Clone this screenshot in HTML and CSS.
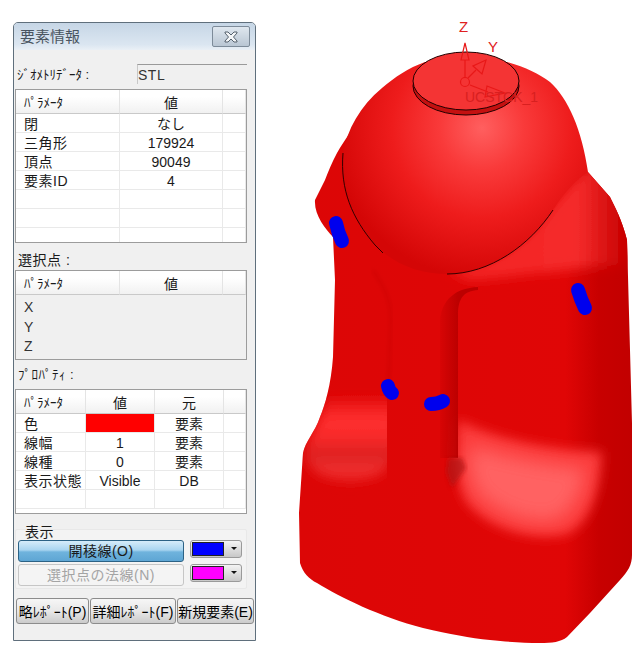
FILE: index.html
```html
<!DOCTYPE html>
<html lang="ja">
<head>
    <meta charset="UTF-8">
    <title>要素情報</title>
    <link rel="stylesheet" href="styles.css">
</head>
<body>
    <div class="page">
        <div class="dialog">
            <div class="title-bar">
                <span class="title">要素情報</span>
                <button class="close-btn">
                    <svg width="16" height="12" viewBox="0 0 16 12">
                        <path class="close-x" d="M2 1h3l3 3 3-3h3v1l-3.500 4 3.500 4v1h-3l-3-3-3 3h-3v-1l3.500-4-3.500-4z"/>
                    </svg>
                </button>
            </div>

            <div class="geo-row">
                <span class="geo-label">ｼﾞｵﾒﾄﾘﾃﾞｰﾀ :</span>
                <div class="geo-value">STL</div>
            </div>

            <div class="table-box box-elem">
                <table class="grid cols-2">
                    <tr><th class="left">ﾊﾟﾗﾒｰﾀ</th><th>値</th><th></th></tr>
                    <tr><td class="left">閉</td><td>なし</td><td></td></tr>
                    <tr><td class="left">三角形</td><td>179924</td><td></td></tr>
                    <tr><td class="left">頂点</td><td>90049</td><td></td></tr>
                    <tr><td class="left">要素ID</td><td>4</td><td></td></tr>
                    <tr><td></td><td></td><td></td></tr>
                    <tr><td></td><td></td><td></td></tr>
                    <tr><td></td><td></td><td></td></tr>
                </table>
            </div>

            <div class="section-label label-point">選択点 :</div>
            <div class="table-box box-point">
                <table class="grid cols-2 plain">
                    <tr><th class="left">ﾊﾟﾗﾒｰﾀ</th><th>値</th><th></th></tr>
                    <tr><td class="left">X</td><td></td><td></td></tr>
                    <tr><td class="left">Y</td><td></td><td></td></tr>
                    <tr><td class="left">Z</td><td></td><td></td></tr>
                </table>
            </div>

            <div class="section-label label-prop">ﾌﾟﾛﾊﾟﾃｨ :</div>
            <div class="table-box box-prop">
                <table class="grid cols-3">
                    <tr><th class="left">ﾊﾟﾗﾒｰﾀ</th><th>値</th><th>元</th><th></th></tr>
                    <tr><td class="left">色</td><td class="red-cell"></td><td>要素</td><td></td></tr>
                    <tr><td class="left">線幅</td><td>1</td><td>要素</td><td></td></tr>
                    <tr><td class="left">線種</td><td>0</td><td>要素</td><td></td></tr>
                    <tr><td class="left">表示状態</td><td>Visible</td><td>DB</td><td></td></tr>
                    <tr><td></td><td></td><td></td><td></td></tr>
                </table>
            </div>

            <div class="display-group">
                <span class="group-label">表示</span>
                <div class="group-row">
                    <button class="wide-btn active">開稜線(O)</button>
                    <div class="color-pick"><span class="swatch swatch-blue"></span><span class="arrow"></span></div>
                </div>
                <div class="group-row">
                    <button class="wide-btn disabled">選択点の法線(N)</button>
                    <div class="color-pick"><span class="swatch swatch-pink"></span><span class="arrow"></span></div>
                </div>
            </div>

            <div class="report-row">
                <button class="report-btn btn-short">略ﾚﾎﾟｰﾄ(P)</button>
                <button class="report-btn btn-detail">詳細ﾚﾎﾟｰﾄ(F)</button>
                <button class="report-btn btn-new">新規要素(E)</button>
            </div>
        </div>

        <svg class="model" width="382" height="659" viewBox="260 0 382 659">
            <defs>
                <linearGradient id="bodyShade" gradientUnits="userSpaceOnUse" x1="299" y1="0" x2="632" y2="0">
                    <stop offset="0" stop-color="#dc0606"/>
                    <stop offset="0.8" stop-color="#e00606"/>
                    <stop offset="0.9" stop-color="#c80000"/>
                    <stop offset="1" stop-color="#c20000"/>
                </linearGradient>
                <radialGradient id="domeShade" gradientUnits="userSpaceOnUse" cx="482" cy="128" r="150">
                    <stop offset="0" stop-color="#ff5f5f"/>
                    <stop offset="0.28" stop-color="#f93a3a"/>
                    <stop offset="0.6" stop-color="#ee1c1c"/>
                    <stop offset="1" stop-color="#d40606"/>
                </radialGradient>
                <linearGradient id="shoulderShade" gradientUnits="userSpaceOnUse" x1="520" y1="0" x2="625" y2="0">
                    <stop offset="0" stop-color="#f42626"/>
                    <stop offset="0.55" stop-color="#f52c2c"/>
                    <stop offset="1" stop-color="#c80000"/>
                </linearGradient>
                <linearGradient id="grooveShade" gradientUnits="userSpaceOnUse" x1="436" y1="0" x2="458" y2="0">
                    <stop offset="0" stop-color="#bc0000" stop-opacity="0"/>
                    <stop offset="1" stop-color="#bc0000"/>
                </linearGradient>
                <linearGradient id="lobeShade" gradientUnits="userSpaceOnUse" x1="0" y1="395" x2="0" y2="490">
                    <stop offset="0" stop-color="#e00606"/>
                    <stop offset="0.25" stop-color="#ff3030"/>
                    <stop offset="0.45" stop-color="#f82a2a"/>
                    <stop offset="0.62" stop-color="#dc2020"/>
                    <stop offset="0.8" stop-color="#f03030"/>
                    <stop offset="1" stop-color="#e00808"/>
                </linearGradient>
                <filter id="blur2"><feGaussianBlur stdDeviation="2"/></filter>
                <filter id="blur6" x="-30%" y="-30%" width="160%" height="160%"><feGaussianBlur stdDeviation="6"/></filter>
                <filter id="blur9" x="-40%" y="-40%" width="180%" height="180%"><feGaussianBlur stdDeviation="9"/></filter>
                <clipPath id="bodyClip">
                    <path d="M352 130 C346 138 341 146 337 153 C332 162 328 172 325 180 L315 200 C314 215 325 228 333 237 L335 280 L333 357 C331 385 325 405 320 417 C315 432 305 442 303 453 L299 513 L300 563 C303 573 309 579 317 583 C340 597 380 617 423 628 C450 634 470 638 490 640 C510 642 525 643 540 643 C552 643 561 642 567 637 L590 613 L620 580 C628 571 632 565 632 555 L632 423 L627 240 C622 220 615 207 610 197 L588 172 Z"/>
                </clipPath>
                <clipPath id="lobeClip">
                    <rect x="290" y="380" width="97" height="120"/>
                </clipPath>
            </defs>

            <path class="body-fill" d="M352 130 C346 138 341 146 337 153 C332 162 328 172 325 180 L315 200 C314 215 325 228 333 237 L335 280 L333 357 C331 385 325 405 320 417 C315 432 305 442 303 453 L299 513 L300 563 C303 573 309 579 317 583 C340 597 380 617 423 628 C450 634 470 638 490 640 C510 642 525 643 540 643 C552 643 561 642 567 637 L590 613 L620 580 C628 571 632 565 632 555 L632 423 L627 240 C622 220 615 207 610 197 L588 172 Z"/>

            <g clip-path="url(#bodyClip)">
                <path class="shoulder" filter="url(#blur6)" d="M588 165 L553 205 C530 240 490 268 447 270 L470 280 C520 276 575 268 645 262 L645 180 Z"/>
                <g clip-path="url(#lobeClip)">
                    <path class="left-glow" filter="url(#blur6)" d="M328 398 L395 398 L395 455 C385 478 360 486 335 480 C318 476 306 465 304 452 Z"/>
                </g>
                <path class="panel-outer" filter="url(#blur6)" d="M458 420 C500 440 550 450 602 452 C600 490 592 520 568 534 C535 542 490 530 468 504 C460 494 454 470 458 420 Z"/>
                <path class="panel-glow" filter="url(#blur9)" d="M470 445 C510 458 550 465 585 468 C582 495 572 512 555 520 C530 524 498 512 480 495 C472 485 468 470 470 445 Z"/>
                <path class="groove" d="M440 320 C442 300 455 288 478 287 L478 290 C464 291 458 298 458 315 L458 458 L440 458 Z"/>
                <path class="corner-dark" filter="url(#blur2)" d="M448 458 L462 458 L466 468 L452 488 L446 472 Z"/>
                <path class="column-line" filter="url(#blur2)" d="M373 270 C382 285 390 295 391 318 L388 400"/>
            </g>

            <path class="dome" d="M343 153 C347 130 360 106 382 88 C395 77 408 68 425 62 L507 62 C525 67 539 74 550 82 C568 98 582 130 588 172 C575 180 562 196 553 210 C530 245 490 274 447 274 C420 274 395 265 375 245 C352 218 340 190 343 153 Z"/>
            <path class="sphere-edge" d="M343 153 C340 190 352 218 375 245 L383 253"/>
            <path class="sphere-edge" d="M447 274 C490 274 530 245 553 210"/>

            <ellipse class="disk-side" cx="466" cy="86" rx="53" ry="29"/>
            <ellipse class="disk-top" cx="466" cy="81" rx="53" ry="29"/>

            <g class="ucs-lines">
                <circle cx="465" cy="82" r="4.500"/>
                <path d="M465 78 V60 M461 60 H469 L465 43 Z"/>
                <path d="M468 78 L476 70 M473 66 L482 74 L486 60 Z"/>
                <path d="M470 85 L488 92 M487 86 L485 97 L505 93 Z"/>
            </g>
            <text class="ucs-text" x="459" y="32">Z</text>
            <text class="ucs-text" x="488" y="52">Y</text>
            <text class="ucs-label" x="465" y="102">UCSTCK_1</text>

            <g class="blue-marks">
                <path d="M336 223 Q338 233 342 241"/>
                <path d="M578 290 Q581 300 585 308"/>
                <path d="M388 386 Q389 391 392 393"/>
                <path d="M431 404 Q438 404 443 401"/>
            </g>
        </svg>
    </div>
</body>
</html>
```

FILE: styles.css
```css
html, body {
    margin: 0;
    padding: 0;
    background: #fff;
    overflow: hidden;
}

.page {
    display: flex;
    align-items: flex-start;
    width: 642px;
    height: 659px;
    font-family: "Liberation Sans", "Noto Sans CJK JP", sans-serif;
    font-size: 14px;
    color: #1a1a1a;
}

.dialog {
    box-sizing: border-box;
    width: 243px;
    height: 619px;
    margin: 22px 0 0 13px;
    border: 1px solid #5f6f7c;
    border-radius: 5px 5px 0 0;
    background: #f0f0f0;
    display: flex;
    flex-direction: column;
}

.title-bar {
    height: 27px;
    flex: none;
    padding: 3px 5px 0 6px;
    box-sizing: border-box;
    display: flex;
    justify-content: space-between;
    background: linear-gradient(#c6d6e6, #dbe6f1 80%, #eaf0f6);
    border-radius: 4px 4px 0 0;
}
.title {
    font-size: 15px;
    line-height: 22px;
    color: #4a5560;
}
.close-btn {
    width: 38px;
    height: 21px;
    padding: 0;
    border: 1px solid #7d8b99;
    border-radius: 2px;
    background: linear-gradient(#dfe7ef, #b9c6d3);
    display: flex;
    align-items: center;
    justify-content: center;
}
.close-x {
    fill: #f4f6f8;
    stroke: #55616d;
    stroke-width: 1;
}

.geo-row {
    display: flex;
    height: 20px;
    margin: 14px 8px 0 3px;
    flex: none;
}
.geo-label {
    width: 120px;
    line-height: 22px;
    font-size: 13px;
}
.geo-value {
    flex: 1;
    box-sizing: border-box;
    border: 1px solid #c8c8c8;
    border-top-color: #9a9a9a;
    border-right: none;
    border-bottom: none;
    padding-left: 0;
    line-height: 20px;
    font-size: 14px;
    letter-spacing: 0.5px;
    color: #333;
}

.table-box {
    box-sizing: border-box;
    width: 232px;
    margin-left: 1px;
    border: 1px solid #9c9c9c;
    background: #fff;
    overflow: hidden;
    flex: none;
}
.box-elem { height: 154px; margin-top: 5px; }
.box-point { height: 90px; margin-top: 2px; background: #f0f0f0; }
.box-prop { height: 125px; margin-top: 6px; }

.section-label {
    height: 16px;
    line-height: 16px;
    margin-left: 4px;
    flex: none;
    letter-spacing: 0.5px;
}
.label-point { margin-top: 9px; }
.label-prop { margin-top: 7px; font-size: 13px; }

.grid {
    width: 100%;
    table-layout: fixed;
    border-spacing: 0;
}
.grid th, .grid td {
    box-sizing: border-box;
    padding: 0;
    text-align: center;
    font-weight: normal;
    overflow: hidden;
    white-space: nowrap;
}
.grid th {
    height: 24px;
    border-bottom: 1px solid #c9c9c9;
    border-right: 1px solid #e4e4e4;
    background: linear-gradient(#fff 30%, #f1f1f1);
    font-size: 14px;
}
.grid td {
    height: 19px;
    line-height: 16px;
    padding-top: 2px;
    border-bottom: 1px solid #e9e9e9;
    border-right: 1px solid #e9e9e9;
}
.grid .left {
    text-align: left;
    padding-left: 8px;
    letter-spacing: 0.5px;
}
.grid th.left {
    letter-spacing: 0;
    font-size: 13px;
}
.cols-2 th:nth-child(1), .cols-2 td:nth-child(1) { width: 104px; }
.cols-2 th:nth-child(2), .cols-2 td:nth-child(2) { width: 103px; }
.cols-3 th:nth-child(1), .cols-3 td:nth-child(1) { width: 70px; }
.cols-3 th:nth-child(2), .cols-3 td:nth-child(2) { width: 69px; }
.cols-3 th:nth-child(3), .cols-3 td:nth-child(3) { width: 69px; }

.plain td {
    border: none;
    color: #333;
}
.plain tr:nth-child(2) td {
    height: 21px;
    padding-top: 3px;
}

.red-cell {
    background: #ff0000;
}

.display-group {
    position: relative;
    box-sizing: border-box;
    width: 232px;
    height: 60px;
    margin: 15px 0 0 1px;
    padding: 10px 3px 0 2px;
    flex: none;
    border: 1px solid #e8e8e8;
    border-radius: 2px;
    background: #f3f3f3;
    display: flex;
    flex-direction: column;
    gap: 2px;
}
.group-label {
    position: absolute;
    top: -6px;
    left: 9px;
    line-height: 16px;
    letter-spacing: 0.5px;
}
.group-row {
    display: flex;
    gap: 6px;
    align-items: flex-start;
}
.wide-btn {
    box-sizing: border-box;
    width: 166px;
    height: 22px;
    padding: 0;
    border-radius: 3px;
    font: inherit;
    letter-spacing: 0.5px;
    line-height: 18px;
}
.wide-btn.active {
    border: 1px solid #2c6285;
    background: linear-gradient(#d6ecfa, #a9d5f0 45%, #6fb3dd 55%, #5ea6d4);
    color: #1a1a1a;
}
.wide-btn.disabled {
    border: 1px solid #c6c6c6;
    background: #f4f4f4;
    color: #a4a4a4;
}
.color-pick {
    box-sizing: border-box;
    width: 52px;
    height: 18px;
    padding: 1px 0 1px 1px;
    border: 1px solid #9a9a9a;
    border-radius: 3px;
    background: linear-gradient(#f4f4f4, #c8c8c8);
    display: flex;
    align-items: stretch;
}
.swatch {
    width: 32px;
    border: 1px solid #222;
    box-sizing: border-box;
}
.swatch-blue { background: #0000ff; }
.swatch-pink { background: #ff00ff; }
.arrow {
    width: 0;
    height: 0;
    margin: 5px 0 0 7px;
    border-left: 3px solid transparent;
    border-right: 3px solid transparent;
    border-top: 3px solid #111;
}

.report-row {
    display: flex;
    gap: 1px;
    margin: 9px 0 0 2px;
    flex: none;
}
.report-btn {
    box-sizing: border-box;
    height: 26px;
    padding: 0;
    border: 1px solid #8c8c8c;
    border-radius: 3px;
    background: linear-gradient(#f6f6f6, #e8e8e8 50%, #cbcbcb);
    font: inherit;
    white-space: nowrap;
}
.btn-short { width: 73px; }
.btn-detail { width: 86px; }
.btn-new { width: 77px; }

.model {
    display: block;
    flex: none;
    margin-left: 4px;
}
.body-fill { fill: url(#bodyShade); }
.shoulder { fill: url(#shoulderShade); }
.groove { fill: url(#grooveShade); }
.left-glow { fill: url(#lobeShade); }
.panel-outer { fill: #fb3a3a; }
.panel-glow { fill: #ff6262; }
.corner-dark { fill: #b01414; opacity: 0.7; }
.column-line { fill: none; stroke: #c80404; stroke-width: 1.500; }
.dome { fill: url(#domeShade); }
.sphere-edge { fill: none; stroke: #300; stroke-width: 1; }
.disk-side { fill: #c41010; stroke: #200; stroke-width: 1; }
.disk-top { fill: #f43434; stroke: #200; stroke-width: 1; }
.ucs-lines { fill: none; stroke: #e81818; stroke-width: 1.200; }
.ucs-text { fill: #e02020; font-size: 15px; }
.ucs-label { fill: #d82020; font-size: 14px; }
.blue-marks { fill: none; stroke: #0000ee; stroke-width: 14px; stroke-linecap: round; }
```
